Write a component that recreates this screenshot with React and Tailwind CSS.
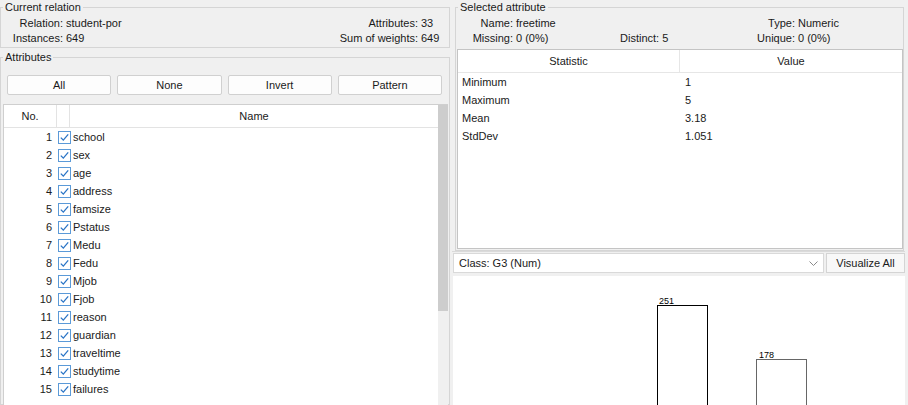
import React from "react";

const attrs = [
  "school", "sex", "age", "address", "famsize", "Pstatus", "Medu", "Fedu",
  "Mjob", "Fjob", "reason", "guardian", "traveltime", "studytime", "failures",
];

const stats = [
  ["Minimum", "1"],
  ["Maximum", "5"],
  ["Mean", "3.18"],
  ["StdDev", "1.051"],
];

function Check() {
  return (
    <svg width="13" height="13" viewBox="0 0 13 13" className="shrink-0">
      <rect x="0.5" y="0.5" width="12" height="12" fill="white" stroke="#5b9ad8" />
      <path d="M2.8 6.6 L5.3 9.1 L10.2 3.4" fill="none" stroke="#2a74c6" strokeWidth="1.3" />
    </svg>
  );
}

export default function App() {
  return (
    <div className="w-[908px] h-[405px] overflow-hidden bg-[#f0f0f0] flex font-['Liberation_Sans',Arial,sans-serif] text-[11px] leading-[15px] text-[#1a1a1a]">
      {/* Left column */}
      <div className="w-[450px] flex flex-col shrink-0">
        <fieldset className="border border-[#d5d5d5] pb-[1px]">
          <legend className="ml-[2px] px-[2px] leading-[15px]">Current relation</legend>
          <div className="grid grid-cols-[62px_1fr_auto_28px] pt-[1px]">
            <div className="text-right">Relation:</div>
            <div className="pl-[3px]">student-por</div>
            <div className="text-right pr-[3px]">Attributes:</div>
            <div>33</div>
            <div className="text-right">Instances:</div>
            <div className="pl-[3px]">649</div>
            <div className="text-right pr-[3px]">Sum of weights:</div>
            <div>649</div>
          </div>
        </fieldset>

        <fieldset className="border border-[#d5d5d5] mt-[2px] flex-1 min-h-0">
          <legend className="ml-[2px] px-[2px] leading-[15px]">Attributes</legend>
          <div className="flex gap-[6px] pl-[6px] pr-[7px] mt-[10px]">
            {["All", "None", "Invert", "Pattern"].map((b) => (
              <div
                key={b}
                className="flex-1 h-[20px] flex items-center justify-center bg-[#fdfdfd] border border-[#d0d0d0] rounded-[2px]"
              >
                {b}
              </div>
            ))}
          </div>
          <div className="mt-[9px] ml-[2px] mr-[1px] h-[400px] flex border-t border-l border-[#cfcfcf] bg-white">
            <div className="flex-1 flex flex-col">
              <div className="h-[23px] flex border-b border-[#e3e3e3] shrink-0">
                <div className="w-[53px] border-r border-[#e3e3e3] flex items-center justify-center">No.</div>
                <div className="w-[13px] border-r border-[#e3e3e3]" />
                <div className="flex-1 flex items-center justify-center">Name</div>
              </div>
              {attrs.map((a, i) => (
                <div key={a} className="h-[18px] flex items-center shrink-0">
                  <div className="w-[53px] text-right pr-[5px]">{i + 1}</div>
                  <div className="ml-[1px]">
                    <Check />
                  </div>
                  <div className="ml-[2px]">{a}</div>
                </div>
              ))}
            </div>
            <div className="w-[10px] flex flex-col">
              <div className="h-[206px] bg-[#cdcdcd]" />
              <div className="flex-1 bg-[#f0f0f0]" />
            </div>
          </div>
        </fieldset>
      </div>

      {/* Right column */}
      <div className="ml-[2px] w-[453px] flex flex-col shrink-0">
        <fieldset className="border border-[#d5d5d5] ml-[3px] mr-[1px] pb-[1px]">
          <legend className="ml-[2px] px-[2px] leading-[15px]">Selected attribute</legend>
          <div className="grid grid-cols-[60px_104px_130px_48px_1fr] pt-[1px]">
            <div className="text-right pr-[3px]">Name:</div>
            <div>freetime</div>
            <div />
            <div className="text-right pr-[3px]">Type:</div>
            <div>Numeric</div>
            <div className="text-right pr-[3px]">Missing:</div>
            <div>0 (0%)</div>
            <div>Distinct: 5</div>
            <div className="text-right pr-[3px]">Unique:</div>
            <div>0 (0%)</div>
          </div>
          <div className="mt-[3px] ml-[1px] h-[200px] border border-[#c4c4c4] bg-white flex flex-col">
            <div className="h-[23px] flex border-b border-[#e6e6e6] shrink-0">
              <div className="w-[222px] border-r border-[#e6e6e6] flex items-center justify-center">Statistic</div>
              <div className="flex-1 flex items-center justify-center">Value</div>
            </div>
            {stats.map(([k, v]) => (
              <div key={k} className="h-[18px] flex items-center">
                <div className="w-[222px] pl-[4px]">{k}</div>
                <div className="pl-[5px]">{v}</div>
              </div>
            ))}
          </div>
        </fieldset>

        <div className="h-[3px] border-b border-[#dadada]" />

        <div className="mt-[1px] ml-[1px] h-[20px] flex shrink-0">
          <div className="flex-1 bg-white border border-[#d9d9d9] flex items-center justify-between pl-[5px] pr-[5px]">
            <span>Class: G3 (Num)</span>
            <svg width="9" height="5" viewBox="0 0 9 5">
              <path d="M0.5 0.5 L4.5 4.5 L8.5 0.5" stroke="#8a8a8a" fill="none" />
            </svg>
          </div>
          <div className="ml-[2px] w-[79px] bg-[#f8f8f8] border border-[#d4d4d4] flex items-center justify-center">
            Visualize All
          </div>
        </div>

        <div className="mt-[3px] ml-[1px] flex-1 bg-white">
          <svg width="452" height="140" viewBox="0 0 452 140" className="block">
            <text x="206" y="28" fontSize="9" fontFamily="Liberation Sans, Arial, sans-serif" fill="#000">251</text>
            <rect x="204.5" y="29.5" width="50" height="200" fill="white" stroke="#000" />
            <text x="306" y="82" fontSize="9" fontFamily="Liberation Sans, Arial, sans-serif" fill="#000">178</text>
            <rect x="303.5" y="83.5" width="50" height="200" fill="white" stroke="#666" />
          </svg>
        </div>
      </div>
    </div>
  );
}
